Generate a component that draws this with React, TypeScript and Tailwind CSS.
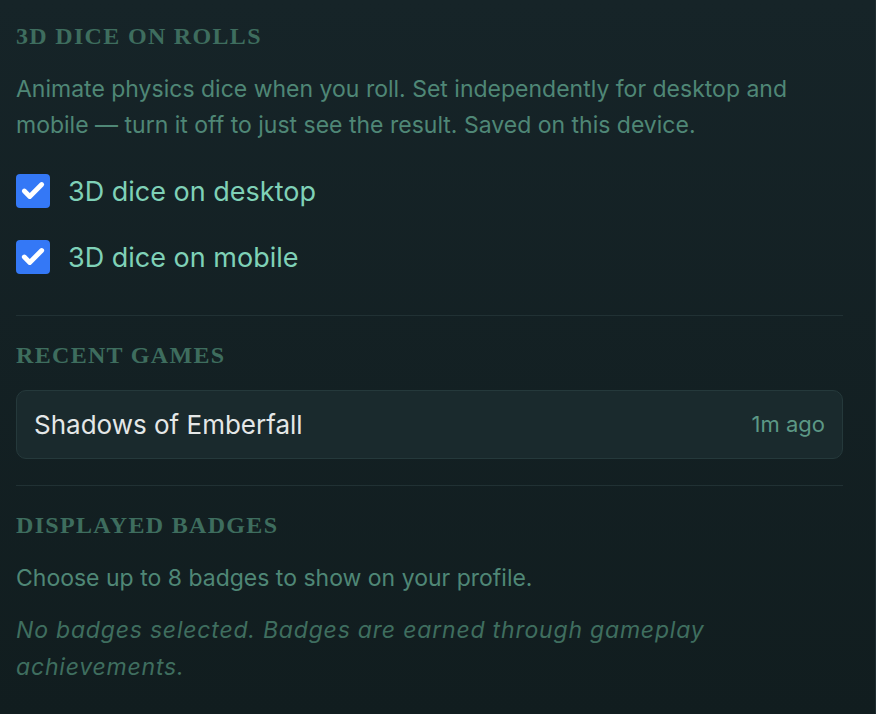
import { Check } from 'lucide-react'

const headingClass =
  "font-['Liberation_Serif',serif] font-bold uppercase text-[24px] leading-none tracking-[0.055em] text-[#3e6d5e]"

const DiceToggle = ({ label }: { label: string }) => (
  <label className="flex items-center gap-[18px]">
    <span className="flex h-[34px] w-[34px] items-center justify-center rounded-[4px] bg-[#3478f6]">
      <Check className="h-[26px] w-[26px] text-white" strokeWidth={4.5} />
    </span>
    <span className="text-[27px] leading-none text-[#7fd1b7]">{label}</span>
  </label>
)

const App = () => {
  return (
    <div className="min-h-[714px] bg-gradient-to-b from-[#162428] to-[#111d1f] font-['Inter',sans-serif]">
      <div className="flex min-h-[714px] border-r border-[#1f2d30] pl-4 pr-8 pt-[24px]">
        <div className="w-[828px]">
          {/* 3D dice */}
          <section>
            <h2 className={headingClass}>3D dice on rolls</h2>
            <p className="mt-[23px] text-[23px] leading-[36px] text-[#4f8776]">
              Animate physics dice when you roll. Set independently for desktop and mobile — turn it
              off to just see the result. Saved on this device.
            </p>
            <div className="mt-[31px] flex flex-col gap-[32px]">
              <DiceToggle label="3D dice on desktop" />
              <DiceToggle label="3D dice on mobile" />
            </div>
          </section>

          <div className="mt-[41px] border-t border-[#213134]" />

          {/* Recent games */}
          <section className="pt-[27px]">
            <h2 className={headingClass}>Recent games</h2>
            <div className="mt-[23px] flex h-[69px] items-center justify-between rounded-[10px] border border-[#25393b] bg-[#1a2a2d] px-[17px]">
              <span className="text-[26px] text-[#e4e7e7]">Shadows of Emberfall</span>
              <span className="text-[22px] text-[#5c9885]">1m ago</span>
            </div>
          </section>

          <div className="mt-[26px] border-t border-[#213134]" />

          {/* Badges */}
          <section className="pt-[27px]">
            <h2 className={headingClass}>Displayed badges</h2>
            <p className="mt-[23px] text-[23px] leading-[36px] text-[#4f8776]">
              Choose up to 8 badges to show on your profile.
            </p>
            <p className="mt-[16px] text-[23px] italic leading-[37px] tracking-[0.035em] text-[#3f6e5f]">
              No badges selected. Badges are earned through gameplay achievements.
            </p>
          </section>
        </div>
      </div>
    </div>
  )
}

export default App
